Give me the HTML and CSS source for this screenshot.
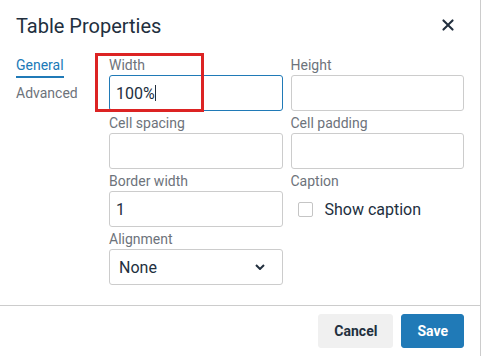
FILE: index.html
```html
<!DOCTYPE html>
<html lang="en">
<head>
    <meta charset="UTF-8">
    <meta name="viewport" content="width=device-width, initial-scale=1.0">
    <title>Table Properties</title>
    <link rel="stylesheet" href="styles.css">
</head>
<body>
    <div class="dialog">
        <div class="dialog-header">
            <h1 class="dialog-title">Table Properties</h1>
            <button class="close-btn" title="Close">
                <svg width="24" height="24" viewBox="0 0 24 24"><path d="M17.3 8.2L13.4 12l3.9 3.8a1 1 0 0 1-1.5 1.5L12 13.4l-3.8 3.9a1 1 0 0 1-1.5-1.5l3.9-3.8-3.9-3.8a1 1 0 0 1 1.5-1.5l3.8 3.9 3.8-3.9a1 1 0 0 1 1.5 1.5z"/></svg>
            </button>
        </div>

        <div class="dialog-body">
            <div class="tabs">
                <div class="tab active">General</div>
                <div class="tab">Advanced</div>
            </div>

            <div class="form-grid">
                <div class="field">
                    <label>Width</label>
                    <div class="input focused">100%<span class="caret"></span></div>
                </div>
                <div class="field">
                    <label>Height</label>
                    <input class="input" type="text">
                </div>
                <div class="field">
                    <label>Cell spacing</label>
                    <input class="input" type="text">
                </div>
                <div class="field">
                    <label>Cell padding</label>
                    <input class="input" type="text">
                </div>
                <div class="field">
                    <label>Border width</label>
                    <input class="input" type="text" value="1">
                </div>
                <div class="field">
                    <label>Caption</label>
                    <div class="check-row">
                        <span class="checkbox"></span>
                        <span>Show caption</span>
                    </div>
                </div>
                <div class="field">
                    <label>Alignment</label>
                    <div class="select-wrap">
                        <select class="input select">
                            <option>None</option>
                        </select>
                        <svg class="chevron" width="10" height="6" viewBox="0 0 10 6"><path d="M1 1l4 4 4-4" fill="none" stroke="#222f3e" stroke-width="2"/></svg>
                    </div>
                </div>
            </div>
        </div>

        <div class="dialog-footer">
            <button class="btn btn-secondary">Cancel</button>
            <button class="btn btn-primary">Save</button>
        </div>

        <!-- annotation box around the Width field -->
        <div class="highlight"></div>
    </div>
</body>
</html>
```

FILE: styles.css
```css
body {
    margin: 0;
    font-family: Roboto, "Liberation Sans", sans-serif;
    color: #222f3e;
    background: #fff;
}
.dialog {
    position: relative;
    width: 481px;
    height: 356px;
    box-sizing: border-box;
    border-right: 1px solid #ccc;
    display: flex;
    flex-direction: column;
}
.dialog-header {
    display: flex;
    justify-content: space-between;
    align-items: center;
    padding: 13px 16px 16px;
}
.dialog-title {
    margin: 0;
    font-size: 20px;
    font-weight: normal;
    line-height: 26px;
}
.close-btn {
    width: 32px;
    height: 26px;
    padding: 0;
    margin-top: -3px;
    border: none;
    background: none;
    display: flex;
    align-items: center;
    justify-content: center;
    fill: #222f3e;
    cursor: pointer;
}
.dialog-body {
    flex: 1;
    display: flex;
    padding: 0 16px;
}
.tabs {
    width: 77px;
    margin-right: 16px;
    flex-shrink: 0;
}
.tab {
    display: inline-block;
    font-size: 14px;
    line-height: 20px;
    padding-bottom: 1px;
    border-bottom: 2px solid transparent;
    margin-bottom: 5px;
    color: #6d737b;
}
.tab.active {
    color: #207ab7;
    border-bottom-color: #207ab7;
}
.form-grid {
    flex: 1;
    display: grid;
    grid-template-columns: 1fr 1fr;
    column-gap: 8px;
    row-gap: 2px;
    align-content: start;
}
.field label {
    display: block;
    font-size: 14px;
    line-height: 20px;
    color: #6d737b;
}
.input {
    display: flex;
    align-items: center;
    width: 100%;
    height: 36px;
    box-sizing: border-box;
    margin: 0;
    padding: 0 6px;
    border: 1px solid #ccc;
    border-radius: 3px;
    background: #fff;
    font-family: inherit;
    font-size: 16px;
    color: #222f3e;
}
.input.focused {
    border-color: #207ab7;
}
.caret {
    display: inline-block;
    width: 1px;
    height: 16px;
    background: #222f3e;
}
.check-row {
    display: flex;
    align-items: center;
    height: 36px;
    font-size: 16px;
}
.checkbox {
    width: 15px;
    height: 15px;
    box-sizing: border-box;
    border: 1px solid #c5c5c5;
    border-radius: 2px;
    margin-left: 7px;
    margin-right: 12px;
}
.select-wrap {
    position: relative;
}
.select {
    display: block;
    appearance: none;
    -webkit-appearance: none;
    padding-left: 9px;
}
.chevron {
    position: absolute;
    right: 18px;
    top: 15px;
}
.dialog-footer {
    display: flex;
    justify-content: flex-end;
    gap: 8px;
    padding: 8px 16px;
    border-top: 1px solid #ccc;
}
.btn {
    height: 34px;
    padding: 0 15px;
    border: 1px solid;
    border-radius: 3px;
    font-family: inherit;
    font-size: 14px;
    font-weight: bold;
    cursor: pointer;
}
.btn-secondary {
    background: #f0f0f0;
    border-color: #f0f0f0;
    color: #222f3e;
}
.btn-primary {
    background: #207ab7;
    border-color: #207ab7;
    color: #fff;
}
.highlight {
    position: absolute;
    left: 95px;
    top: 53px;
    width: 109px;
    height: 59px;
    box-sizing: border-box;
    border: 3px solid #dc2323;
}
```
